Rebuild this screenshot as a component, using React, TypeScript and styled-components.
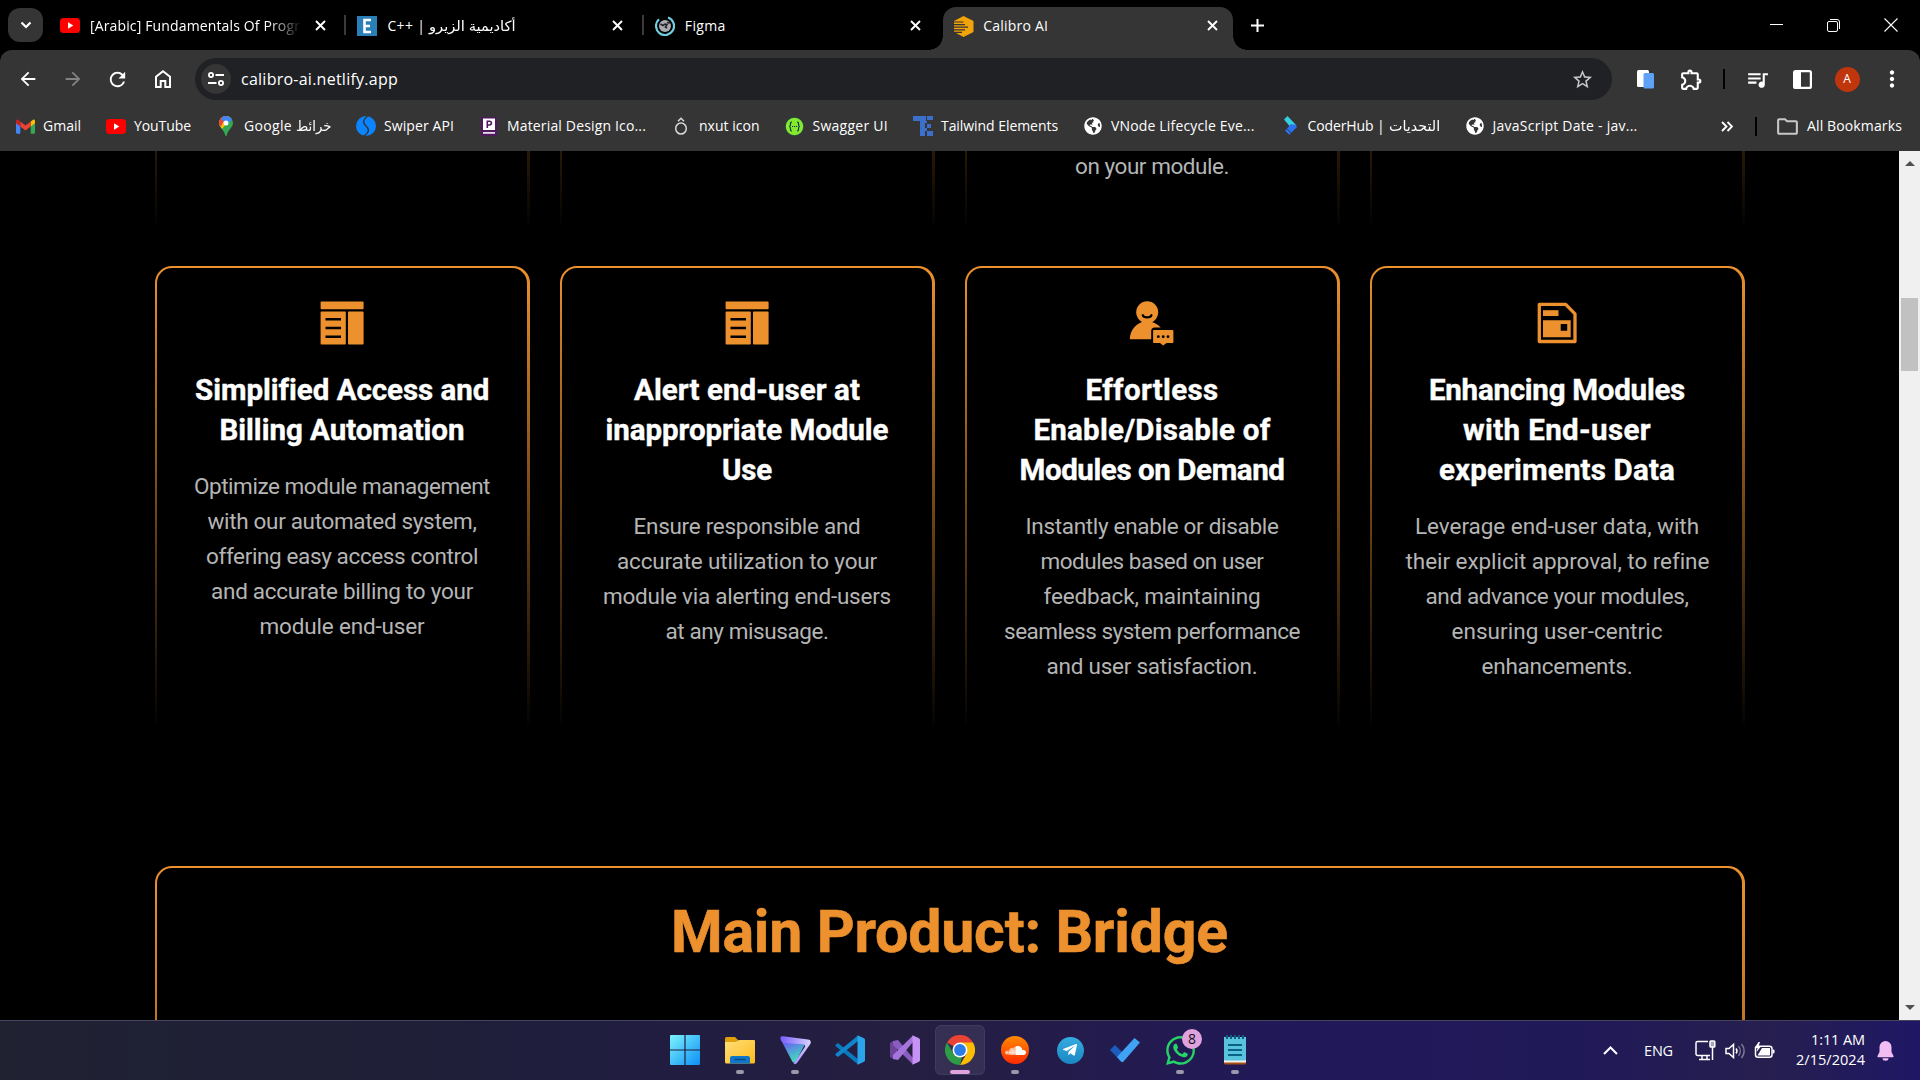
import React, { useLayoutEffect, useRef } from "react";
import styled, { createGlobalStyle, css } from "styled-components";
import {
  MdArrowBack,
  MdArrowForward,
  MdRefresh,
  MdOutlineExtension,
  MdStarBorder,
  MdQueueMusic,
  MdMoreVert,
  MdOutlineFolder,
} from "react-icons/md";
import { FaGlobeAmericas, FaSoundcloud, FaTelegramPlane, FaWhatsapp } from "react-icons/fa";

const ORANGE = "#ec912d";
const CHROME = "#353535";
const UI_FONT = `"Open Sans", "Noto Sans", "DejaVu Sans", sans-serif`;
const SITE_FONT = `Roboto, "Noto Sans", sans-serif`;

const Global = createGlobalStyle`
  * { box-sizing: border-box; }
  html, body { margin: 0; padding: 0; background: #000; overflow: hidden; }
  svg { display: block; flex: none; }
`;

/* ---------- text whose tracking is adjusted to a known width ---------- */

const FitBox = styled.span<{ $w: number }>`
  display: block;
  flex: none;
  width: ${(p) => p.$w}px;
  white-space: pre;
`;
const FitInner = styled.span`
  display: inline-block;
  transform-origin: 0 50%;
`;

function Fit({ w, rtl, children }: { w: number; rtl?: boolean; children: string }) {
  const ref = useRef<HTMLSpanElement>(null);
  useLayoutEffect(() => {
    const el = ref.current;
    if (!el) return;
    el.style.letterSpacing = "0px";
    el.style.transform = "none";
    const natural = el.offsetWidth;
    if (rtl) el.style.transform = `scaleX(${w / natural})`;
    else {
      const exact = el.getBoundingClientRect().width;
      el.style.letterSpacing = `${(w - exact) / children.length}px`;
    }
  }, [w, rtl, children]);
  return (
    <FitBox $w={w}>
      <FitInner ref={ref}>{children}</FitInner>
    </FitBox>
  );
}

/* ---------- frame ---------- */

const Screen = styled.div`
  width: 1920px;
  height: 1080px;
  display: flex;
  flex-direction: column;
  background: #000;
  overflow: hidden;
  font-family: ${UI_FONT};
  color: #fff;
`;

/* ---------- tab strip ---------- */

const TabStrip = styled.div`
  height: 50px;
  flex: none;
  display: flex;
  align-items: center;
  padding: 0 1px 0 8px;
`;
const TabSearch = styled.div`
  width: 35px;
  height: 34px;
  border-radius: 12px;
  background: ${CHROME};
  display: grid;
  place-items: center;
  margin-right: 5px;
`;
const Tab = styled.div<{ $active?: boolean; $divider?: boolean }>`
  width: 297.4px;
  height: 50px;
  display: flex;
  align-items: center;
  padding: 1px 17px 0 12px;
  position: relative;
  font-size: 14px;
  ${(p) =>
    p.$divider &&
    css`
      &::after {
        content: "";
        position: absolute;
        right: -1px;
        top: 15px;
        width: 2px;
        height: 20px;
        background: #3a3a3a;
      }
    `}
  ${(p) =>
    p.$active &&
    css`
      width: 290px;
      height: 43px;
      align-self: flex-end;
      margin-left: 3px;
      padding: 0 13px 6px 10px;
      background: ${CHROME};
      border-radius: 13px 13px 0 0;
      &::before,
      &::after {
        content: "";
        position: absolute;
        bottom: 0;
        width: 14px;
        height: 14px;
      }
      &::before {
        left: -14px;
        background: radial-gradient(circle at 0 0, transparent 13.5px, ${CHROME} 14px);
      }
      &::after {
        right: -14px;
        background: radial-gradient(circle at 100% 0, transparent 13.5px, ${CHROME} 14px);
      }
    `}
`;
const Favicon = styled.div`
  width: 20px;
  height: 20px;
  flex: none;
  display: grid;
  place-items: center;
`;
const TabTitle = styled.div<{ $fade?: boolean }>`
  margin-left: 10px;
  width: 212px;
  flex: none;
  height: 24px;
  line-height: 23px;
  display: flex;
  gap: 4px;
  overflow: hidden;
  ${(p) =>
    p.$fade &&
    css`
      mask-image: linear-gradient(90deg, #000 84%, transparent 100%);
    `}
`;
const TabClose = styled.div`
  margin-left: auto;
  width: 16px;
  height: 16px;
  display: grid;
  place-items: center;
`;
const NewTab = styled.div`
  width: 20px;
  height: 20px;
  margin-left: 14px;
  display: grid;
  place-items: center;
`;
const WindowButtons = styled.div`
  margin-left: auto;
  display: flex;
  height: 48px;
`;
const WindowButton = styled.div`
  width: 57px;
  display: grid;
  place-items: center;
`;

/* ---------- toolbar ---------- */

const Toolbar = styled.div`
  height: 58px;
  flex: none;
  background: ${CHROME};
  border-radius: 12px 12px 0 0;
  display: flex;
  align-items: center;
  padding-left: 5px;
  font-size: 16px;
`;
const ToolButton = styled.div<{ $w?: number; $dim?: boolean }>`
  width: ${(p) => p.$w ?? 45}px;
  height: 45px;
  flex: none;
  display: grid;
  place-items: center;
  color: ${(p) => (p.$dim ? "#828282" : "#fff")};
`;
const Omnibox = styled.div`
  width: 1417px;
  height: 42px;
  margin-left: 10px;
  border-radius: 21px;
  background: #202124;
  display: flex;
  align-items: center;
  padding: 0 18px 0 6px;
`;
const SiteInfo = styled.div`
  width: 30px;
  height: 30px;
  border-radius: 50%;
  background: ${CHROME};
  display: grid;
  place-items: center;
  margin-right: 10px;
`;
const OmniStar = styled.div`
  margin-left: auto;
  color: #c7c7c7;
`;
const Divider = styled.div<{ $h: number }>`
  width: 2px;
  height: ${(p) => p.$h}px;
  background: #000;
  flex: none;
`;
const Avatar = styled.div`
  width: 25px;
  height: 25px;
  border-radius: 50%;
  background: #bf360c;
  display: grid;
  place-items: center;
  font-size: 12px;
  line-height: 1;
`;

/* ---------- bookmarks ---------- */

const Bookmarks = styled.div`
  height: 43px;
  flex: none;
  background: ${CHROME};
  display: flex;
  align-items: center;
  padding: 0 18px 7px 15px;
  font-size: 14px;
  line-height: 20px;
  gap: 25px;
`;
const Bookmark = styled.div`
  display: flex;
  align-items: center;
  gap: 8px;
  flex: none;
`;
const Label = styled.div`
  display: flex;
  gap: 4px;
`;
const BookmarksEnd = styled.div`
  margin-left: auto;
  display: flex;
  align-items: center;
`;

/* ---------- page ---------- */

const Viewport = styled.div`
  height: 869px;
  flex: none;
  display: flex;
  overflow: hidden;
`;
const Page = styled.main`
  width: 1899px;
  height: 869px;
  overflow: hidden;
  padding: 0 154px 0 155px;
  font-family: ${SITE_FONT};
`;
const Features = styled.section`
  margin-top: -385px;
  display: grid;
  grid-template-columns: repeat(4, 375px);
  grid-auto-rows: 460px;
  gap: 40px 30px;
`;
const Frame = styled.div<{ $h: number }>`
  height: ${(p) => p.$h}px;
  padding: 2px 3px 0 2px;
  border-radius: 17px 17px 0 0;
  background: linear-gradient(180deg, ${ORANGE}, #000 101.5%);
`;
const CardBody = styled.div<{ $end?: boolean; $top?: number }>`
  height: 100%;
  background: #000;
  border-radius: 15px 15px 0 0;
  display: flex;
  flex-direction: column;
  align-items: center;
  justify-content: ${(p) => (p.$end ? "flex-end" : "flex-start")};
  padding: ${(p) => p.$top ?? 31}px 0 ${(p) => (p.$end ? 42 : 0)}px;
`;
const CardTitle = styled.h3`
  margin: 23px 0 19px;
  font-size: 29.5px;
  line-height: 40px;
  font-weight: 700;
  -webkit-text-stroke: 0.4px #fff;
  display: flex;
  flex-direction: column;
  align-items: center;
`;
const CardText = styled.p`
  margin: 0;
  font-size: 22.5px;
  line-height: 35px;
  color: #b5b5b5;
  display: flex;
  flex-direction: column;
  align-items: center;
`;
const Product = styled.section`
  margin-top: 140px;
`;
const ProductTitle = styled.h2`
  margin: 0;
  font-size: 59px;
  line-height: 72px;
  font-weight: 700;
  color: ${ORANGE};
  -webkit-text-stroke: 0.6px ${ORANGE};
`;
const Scrollbar = styled.div`
  width: 21px;
  background: #f0f0f0;
  display: flex;
  flex-direction: column;
  align-items: center;
`;
const ScrollArrow = styled.div<{ $down?: boolean }>`
  height: 24px;
  display: grid;
  place-items: center;
  transform: ${(p) => (p.$down ? "rotate(180deg)" : "none")};
`;
const ScrollTrack = styled.div`
  flex: 1;
  padding-top: 123px;
`;
const ScrollThumb = styled.div`
  width: 17px;
  height: 73px;
  background: #c1c1c1;
`;

/* ---------- taskbar ---------- */

const Taskbar = styled.div`
  height: 60px;
  flex: none;
  border-top: 1px solid #46435f;
  background: linear-gradient(90deg, #202232 0%, #1f1f38 22%, #201d40 33%, #251f41 47%, #21185a 68%, #211a57 84%, #261f4e 92%, #1f1765 100%);
  display: flex;
`;
const Apps = styled.div`
  display: flex;
  margin-left: 660px;
`;
const AppSlot = styled.div<{ $active?: boolean }>`
  width: 50px;
  height: 50px;
  margin: 4px 5px 0 0;
  padding-top: 10px;
  display: flex;
  flex-direction: column;
  align-items: center;
  gap: 5px;
  border-radius: 6px;
  position: relative;
  ${(p) =>
    p.$active &&
    css`
      background: rgba(255, 255, 255, 0.08);
      box-shadow: inset 0 0 0 1px rgba(255, 255, 255, 0.06);
    `}
`;
const Running = styled.div<{ $focused?: boolean }>`
  width: ${(p) => (p.$focused ? 20 : 8)}px;
  height: 4px;
  border-radius: 2px;
  background: ${(p) => (p.$focused ? "#dfa2df" : "#9a98ab")};
`;
const Badge = styled.div`
  position: absolute;
  left: 27px;
  top: 4px;
  width: 20px;
  height: 20px;
  border-radius: 50%;
  background: #dfa2df;
  color: #111;
  font-size: 14px;
  line-height: 19px;
  text-align: center;
`;
const Disc = styled.div<{ $bg: string; $s: number }>`
  width: ${(p) => p.$s}px;
  height: ${(p) => p.$s}px;
  margin: ${(p) => (30 - p.$s) / 2}px 0;
  border-radius: 50%;
  background: ${(p) => p.$bg};
  display: grid;
  place-items: center;
  color: #fff;
`;
const WhatsApp = styled(FaWhatsapp)`
  margin: -1.5px 0;
  color: #25d366;
`;
const Tray = styled.div`
  margin-left: auto;
  display: flex;
  align-items: center;
  padding-right: 26px;
  font-size: 14.5px;
  line-height: 20px;
`;
const Gap = styled.div<{ $w: number }>`
  width: ${(p) => p.$w}px;
  flex: none;
`;
const Clock = styled.div`
  display: flex;
  flex-direction: column;
  align-items: flex-end;
  padding-bottom: 1px;
`;

/* ---------- small drawings ---------- */

const Cross = () => (
  <svg width="11" height="11" viewBox="0 0 11 11" stroke="#fff" strokeWidth="1.9">
    <path d="M1 1l9 9M10 1l-9 9" />
  </svg>
);
const YouTube = () => (
  <svg width="20" height="15" viewBox="0 0 20 15">
    <rect width="20" height="15" rx="3.5" fill="#f00" />
    <path d="M8 4.3v6.4l5.3-3.2z" fill="#fff" />
  </svg>
);
const Gmail = () => (
  <svg width="19" height="15" viewBox="0 0 19 15">
    <path d="M0 3v10.5c0 .8.6 1.2 1.3 1.2h3V6.2z" fill="#4285f4" />
    <path d="M19 3v10.5c0 .8-.6 1.2-1.3 1.2h-3V6.2z" fill="#34a853" />
    <path d="M14.7 2.6L17 .8c.9-.6 2 .1 2 1.2v2.3l-4.3 3.3z" fill="#fbbc04" />
    <path d="M4.3 2.6l5.2 3.9 5.2-3.9v5l-5.2 3.9-5.2-3.9z" fill="#ea4335" />
    <path d="M4.3 2.6L2 .8C1.1.2 0 .9 0 2v2.3l4.3 3.3z" fill="#c5221f" />
  </svg>
);
const MapsPin = () => (
  <svg width="14" height="20" viewBox="0 0 14 20">
    <defs>
      <clipPath id="pin">
        <path d="M7 0a7 7 0 0 1 7 7c0 4.500-5 6.500-6.200 12.300-.2 1-1.400 1-1.600 0C5 13.500 0 11.500 0 7a7 7 0 0 1 7-7z" />
      </clipPath>
    </defs>
    <g clipPath="url(#pin)">
      <rect width="14" height="20" fill="#34a853" />
      <path d="M0 0h14L3 13 0 9z" fill="#fbbc04" />
      <path d="M0 0h8L2 10H0z" fill="#ea4335" />
      <path d="M3 0h11v3L8 8 2 3z" fill="#4285f4" />
    </g>
    <circle cx="7" cy="7" r="2.5" fill="#fff" />
  </svg>
);
const Swiper = () => (
  <svg width="20" height="20" viewBox="0 0 20 20">
    <circle cx="10" cy="10" r="10" fill="#0a84ff" />
    <path d="M12.500 -0.500C6.500 3.500 6.500 7 10 10s3.500 6.500-2.500 10.500" fill="none" stroke="#353535" strokeWidth="1.500" />
  </svg>
);
const PDoc = () => (
  <svg width="16" height="19" viewBox="0 0 16 19">
    <rect width="16" height="19" rx="1.5" fill="#50195f" />
    <rect x="2" y="1.5" width="12" height="11.5" fill="#fff" />
    <rect x="2" y="15" width="12" height="1.8" fill="#e6dcea" />
    <path d="M6.300 11V4.200h2.200a1.900 1.900 0 0 1 0 3.800H6.300" fill="none" stroke="#50195f" strokeWidth="1.600" />
  </svg>
);
const NxutIcon = () => (
  <svg width="14" height="18" viewBox="0 0 14 18" fill="none" stroke="#d8d8d8" strokeWidth="1.5">
    <ellipse cx="7" cy="11.5" rx="5.3" ry="5.5" />
    <path d="M4 4.300L7 1.300l3 3" />
  </svg>
);
const Swagger = () => (
  <svg width="19" height="19" viewBox="0 0 19 19">
    <circle cx="9.5" cy="9.5" r="9.2" fill="#85ea2d" stroke="#173647" strokeWidth=".8" />
    <path d="M7 5c-2 0-1.500 1.500-1.500 2.800 0 1-.5 1.700-1.500 1.700 1 0 1.500.7 1.500 1.700C5.500 12.500 5 14 7 14M12 5c2 0 1.500 1.500 1.500 2.800 0 1 .5 1.700 1.500 1.700-1 0-1.500.7-1.500 1.700 0 1.300.5 2.800-1.500 2.800M7 9.500h1.200M9 9.500h1.200M11 9.500h1.200" fill="none" stroke="#173647" strokeWidth="1.200" />
  </svg>
);
const TailwindE = () => (
  <svg width="20" height="20" viewBox="0 0 20 20" fill="#3b6fc9">
    <path d="M0 0h13v5H0zM7 5h5v15H7zM14 0h6v4h-6zM14 8h4v4h-4zM14 15h6v5h-6zM12 5h2v2h-2zM12 12h2v3h-2z" />
  </svg>
);
const CoderHub = () => (
  <svg width="14" height="20" viewBox="0 0 14 20">
    <path d="M1 3.500L4.500 0 13 9l-3.500 4.500z" fill="#35cfe0" />
    <path d="M13 9l1 2-8 8-4-4 6-7z" fill="#2b72f0" />
    <path d="M2 15l4 4M4 13l4 4" stroke="#353535" strokeWidth=".8" />
  </svg>
);
const CalibroLogo = () => (
  <svg width="21" height="21" viewBox="0 0 21 21">
    <path d="M10.500 0L20.500 5v11L10.500 21 1 16V5z" fill="#f0a30a" />
    <path d="M0 6h10.500M0 8.600h12M0 11.200h15M0 13.800h12M0 16.400h9" stroke={CHROME} strokeWidth="1.200" />
  </svg>
);
const FigmaSpinner = () => (
  <svg width="20" height="20" viewBox="0 0 20 20">
    <circle cx="10" cy="10" r="6" fill="#a9abb0" />
    <path d="M5.500 8l2.500 1.500 2-1.500 2 .5-1.500 2.500 1.500 1M12 6.500l3 .5" stroke="#222" strokeWidth="1.600" fill="none" />
    <path d="M13 1.500A9 9 0 1 1 4 3.300" stroke="#6fd0e2" strokeWidth="2.200" fill="none" />
  </svg>
);
const EIcon = () => (
  <svg width="20" height="20" viewBox="0 0 20 20">
    <rect width="20" height="20" fill="#2980b9" />
    <path d="M14 4H7.500v12H14M7.500 10H13" stroke="#fff" strokeWidth="2.600" fill="none" />
  </svg>
);

const LayoutIcon = () => (
  <svg width="48" height="48" viewBox="0 0 48 48" fill={ORANGE}>
    <rect x="2.6" y="2.6" width="43" height="7.7" rx=".8" />
    <rect x="2.6" y="12.6" width="25.2" height="33" rx=".8" />
    <rect x="30" y="12.6" width="15.6" height="33" rx=".8" />
    <path d="M7.500 20.200h15.500M7.500 29h15.500M7.500 37.800h15.500" stroke="#000" strokeWidth="2.600" />
  </svg>
);
const PersonIcon = () => (
  <svg width="48" height="48" viewBox="0 0 48 48" fill={ORANGE}>
    <circle cx="19.2" cy="13.3" r="11" />
    <path d="M14.800 16.300c1 2.700 7.600 2.700 8.600 0" fill="none" stroke="#000" strokeWidth="2.300" strokeLinecap="round" />
    <path d="M1.800 40.300C2 31 8 25 14 23h10c3.500 1 6.500 3 8.700 5.500h-6a3.500 3.500 0 0 0-3.500 3.500v8.300z" />
    <path d="M26 31h18.500c.5 0 .9.400.9.900v11c0 .6-.4 1-.9 1h-6L35.200 46.600 32 43.900h-6c-.5 0-.9-.4-.9-1v-11c0-.5.400-.9.900-.9z" />
    <g fill="#000">
      <circle cx="30.3" cy="37.7" r="1.4" />
      <circle cx="35.2" cy="37.7" r="1.4" />
      <circle cx="40" cy="37.7" r="1.4" />
    </g>
  </svg>
);
const SaveIcon = () => (
  <svg width="48" height="48" viewBox="0 0 48 48" fill={ORANGE}>
    <path d="M6.300 5.300h26.400l9.300 9.500v27.700H6.300z" fill="none" stroke={ORANGE} strokeWidth="3.300" strokeLinejoin="round" />
    <rect x="10" y="11.2" width="15.5" height="5.8" />
    <path fillRule="evenodd" d="M10 21.200h27.700v17H10zM27.700 25v6.700h6.500V25z" />
  </svg>
);

const WindowsLogo = () => (
  <svg width="30" height="30" viewBox="0 0 30 30">
    <defs>
      <linearGradient id="win" x1="0" y1="0" x2="1" y2="1">
        <stop offset="0" stopColor="#7df3fd" />
        <stop offset="1" stopColor="#0c8ff5" />
      </linearGradient>
    </defs>
    <path d="M0 1a1 1 0 0 1 1-1h13.400v14.400H0zM15.600 0H29a1 1 0 0 1 1 1v13.400H15.600zM0 15.600h14.400V30H1a1 1 0 0 1-1-1zM15.600 15.600H30V29a1 1 0 0 1-1 1H15.600z" fill="url(#win)" />
  </svg>
);
const Explorer = () => (
  <svg width="30" height="30" viewBox="0 0 30 30">
    <defs>
      <linearGradient id="folder" x1="0" y1="0" x2="1" y2="1">
        <stop offset="0" stopColor="#ffdf7a" />
        <stop offset="1" stopColor="#fdbb1c" />
      </linearGradient>
    </defs>
    <path d="M0 3.500A1.500 1.500 0 0 1 1.500 2H10l3 3v6H0z" fill="#dfa00c" />
    <path d="M0 7h11l3-2h15a1 1 0 0 1 1 1v21a1.500 1.500 0 0 1-1.500 1.500h-27A1.500 1.500 0 0 1 0 27z" fill="url(#folder)" />
    <path d="M5 28.500V23a2 2 0 0 1 2-2h16a2 2 0 0 1 2 2v5.500z" fill="#0f76c8" />
    <path d="M9.500 24.500h11" stroke="#0a4a86" strokeWidth="1.500" />
  </svg>
);
const Proton = () => (
  <svg width="31" height="30" viewBox="0 0 31 30">
    <defs>
      <linearGradient id="pr" x1="0" y1="0" x2=".5" y2="1">
        <stop offset="0" stopColor="#6d4aff" />
        <stop offset="1" stopColor="#3fe0b8" />
      </linearGradient>
      <linearGradient id="pr2" x1="0" y1="0" x2="1" y2="0">
        <stop offset="0" stopColor="#7a5cff" />
        <stop offset="1" stopColor="#d8d2ff" />
      </linearGradient>
    </defs>
    <path d="M1 5l11 21c1 2 3 2 4 0L25 9z" fill="url(#pr)" />
    <path d="M.5 4C0 2 1 1 3 1.200L28 4.500c2.500.4 3.500 2 2.300 4.500L17 28c-.8 1.300-2.500 1.500-3.500.500l11-16c1-1.800.3-3-1.500-3.200L4 8C2 7.500 1 6 .5 4z" fill="url(#pr2)" />
  </svg>
);
const VSCode = () => (
  <svg width="30" height="30" viewBox="0 0 30 30">
    <path d="M1 9.500L3 8l20 16v5.500L1 11.500c-.8-.8-.8-1.200 0-2z" fill="#0a78bd" />
    <path d="M1 20.500L3 22l20-16V.5L1 18.500c-.8.800-.8 1.200 0 2z" fill="#0f85cc" />
    <path d="M22.500.2L29 3.200a2 2 0 0 1 1 1.700v20.200a2 2 0 0 1-1 1.700l-6.500 3z" fill="#2ba4ec" />
  </svg>
);
const VisualStudio = () => (
  <svg width="30" height="30" viewBox="0 0 30 30">
    <path d="M0 8l3-2v18l-3-2zM3 6l4 3v12l-4 3z" fill="#6b4398" />
    <path d="M3 6l5-1 15 18v6.500L3 10z" fill="#8a5cc0" />
    <path d="M3 24l5 1L23 7V.5L3 20z" fill="#a675dc" />
    <path d="M22.500.2L29 3.200a2 2 0 0 1 1 1.700v20.200a2 2 0 0 1-1 1.700l-6.500 3z" fill="#c792f5" />
  </svg>
);
const ChromeLogo = () => (
  <svg width="30" height="30" viewBox="0 0 30 30">
    <path d="M15 15L2 7.500A15 15 0 0 1 28 7.500z" fill="#ea4335" />
    <path d="M15 7.500h13A15 15 0 0 1 15 30l6.500-11.200z" fill="#fbbc04" />
    <path d="M2 7.500l6.500 11.300L15 22.500l2-.3L15 30A15 15 0 0 1 2 7.500z" fill="#2e9c47" />
    <circle cx="15" cy="15" r="7.5" fill="#fff" />
    <circle cx="15" cy="15" r="5.9" fill="#2a7de8" />
  </svg>
);
const ToDo = () => (
  <svg width="30" height="30" viewBox="0 0 30 30">
    <path d="M0 15l5-5 9 9-2.500 8z" fill="#1c5cbf" />
    <path d="M7 22L24.500 3l5.500 4.500L13.500 26.500c-.8.900-1.700.9-2.500 0z" fill="#3fa2f4" />
  </svg>
);
const Notepad = () => (
  <svg width="24" height="30" viewBox="0 0 24 30">
    <rect x="1" y="2" width="22" height="27.5" rx="1.5" fill="#a8500f" />
    <rect x="1" y="2" width="22" height="25.5" fill="#f1f1f1" />
    <rect x="1" y="2" width="22" height="23.5" rx="1" fill="#58c3dd" />
    <path d="M5 10h14M5 15h14M5 20h14" stroke="#0b6284" strokeWidth="1.800" />
    <path d="M4 0v4M8 0v4M12 0v4M16 0v4M20 0v4" stroke="#0e5c80" strokeWidth="2" />
  </svg>
);

/* ---------- data ---------- */

type Line = [string, number];
const cards: { icon: React.ReactNode; title: Line[]; text: Line[] }[] = [
  {
    icon: <LayoutIcon />,
    title: [["Simplified Access and", 294], ["Billing Automation", 245]],
    text: [
      ["Optimize module management", 296],
      ["with our automated system,", 269],
      ["offering easy access control", 272],
      ["and accurate billing to your", 262],
      ["module end-user", 165],
    ],
  },
  {
    icon: <LayoutIcon />,
    title: [["Alert end-user at", 226], ["inappropriate Module", 283], ["Use", 50]],
    text: [
      ["Ensure responsible and", 227],
      ["accurate utilization to your", 260],
      ["module via alerting end-users", 288],
      ["at any misusage.", 163],
    ],
  },
  {
    icon: <PersonIcon />,
    title: [["Effortless", 133], ["Enable/Disable of", 237], ["Modules on Demand", 265]],
    text: [
      ["Instantly enable or disable", 253],
      ["modules based on user", 223],
      ["feedback, maintaining", 217],
      ["seamless system performance", 296],
      ["and user satisfaction.", 211],
    ],
  },
  {
    icon: <SaveIcon />,
    title: [["Enhancing Modules", 256], ["with End-user", 188], ["experiments Data", 236]],
    text: [
      ["Leverage end-user data, with", 284],
      ["their explicit approval, to refine", 303],
      ["and advance your modules,", 263],
      ["ensuring user-centric", 211],
      ["enhancements.", 151],
    ],
  },
];

type Part = { t: string; w: number; rtl?: boolean };
const bookmarks: { icon: React.ReactNode; parts: Part[] }[] = [
  { icon: <Gmail />, parts: [{ t: "Gmail", w: 38 }] },
  { icon: <YouTube />, parts: [{ t: "YouTube", w: 57 }] },
  { icon: <MapsPin />, parts: [{ t: "Google", w: 48 }, { t: "خرائط", w: 35, rtl: true }] },
  { icon: <Swiper />, parts: [{ t: "Swiper API", w: 70 }] },
  { icon: <PDoc />, parts: [{ t: "Material Design Ico...", w: 139 }] },
  { icon: <NxutIcon />, parts: [{ t: "nxut icon", w: 60.5 }] },
  { icon: <Swagger />, parts: [{ t: "Swagger UI", w: 75.5 }] },
  { icon: <TailwindE />, parts: [{ t: "Tailwind Elements", w: 117 }] },
  { icon: <FaGlobeAmericas size={18} />, parts: [{ t: "VNode Lifecycle Eve...", w: 143.500 }] },
  { icon: <CoderHub />, parts: [{ t: "CoderHub |", w: 77 }, { t: "التحديات", w: 51, rtl: true }] },
  { icon: <FaGlobeAmericas size={18} />, parts: [{ t: "JavaScript Date - jav...", w: 145 }] },
];

const tabs: { icon: React.ReactNode; parts: Part[]; fade?: boolean; divider?: boolean; active?: boolean }[] = [
  { icon: <YouTube />, parts: [{ t: "[Arabic] Fundamentals Of Progr", w: 210 }], fade: true, divider: true },
  { icon: <EIcon />, parts: [{ t: "C++ |", w: 38 }, { t: "أكاديمية الزيرو", w: 87, rtl: true }], divider: true },
  { icon: <FigmaSpinner />, parts: [{ t: "Figma", w: 41 }] },
  { icon: <CalibroLogo />, parts: [{ t: "Calibro AI", w: 65 }], active: true },
];

const apps: { icon: React.ReactNode; running?: boolean; active?: boolean; badge?: string }[] = [
  { icon: <WindowsLogo /> },
  { icon: <Explorer />, running: true },
  { icon: <Proton />, running: true },
  { icon: <VSCode /> },
  { icon: <VisualStudio /> },
  { icon: <ChromeLogo />, running: true, active: true },
  { icon: <Disc $s={28} $bg="linear-gradient(#ff8a00,#ff2a00)"><FaSoundcloud size={21} /></Disc>, running: true },
  { icon: <Disc $s={27} $bg="linear-gradient(#35ace0,#1b87c4)"><FaTelegramPlane size={16} /></Disc> },
  { icon: <ToDo /> },
  { icon: <WhatsApp size={33} />, running: true, badge: "8" },
  { icon: <Notepad />, running: true },
];

/* ---------- screen ---------- */

export default function App() {
  return (
    <Screen>
      <Global />
      <TabStrip>
        <TabSearch>
          <svg width="12" height="8" viewBox="0 0 12 8" fill="none" stroke="#fff" strokeWidth="2.2">
            <path d="M1.500 1.500L6 6l4.500-4.500" />
          </svg>
        </TabSearch>
        {tabs.map((t, i) => (
          <Tab key={i} $active={t.active} $divider={t.divider}>
            <Favicon>{t.icon}</Favicon>
            <TabTitle $fade={t.fade}>
              {t.parts.map((p) => (
                <Fit key={p.t} w={p.w} rtl={p.rtl}>{p.t}</Fit>
              ))}
            </TabTitle>
            <TabClose>
              <Cross />
            </TabClose>
          </Tab>
        ))}
        <NewTab>
          <svg width="13" height="13" viewBox="0 0 13 13" stroke="#fff" strokeWidth="2">
            <path d="M6.500 0v13M0 6.500h13" />
          </svg>
        </NewTab>
        <WindowButtons>
          <WindowButton>
            <svg width="13" height="2" viewBox="0 0 13 2"><rect width="13" height="1" fill="#fff" /></svg>
          </WindowButton>
          <WindowButton>
            <svg width="13" height="13" viewBox="0 0 13 13" fill="none" stroke="#fff">
              <rect x=".5" y="2.5" width="10" height="10" rx="1.5" />
              <path d="M3 .5h7a2.500 2.500 0 0 1 2.500 2.500v7" />
            </svg>
          </WindowButton>
          <WindowButton>
            <svg width="14" height="14" viewBox="0 0 14 14" stroke="#fff" strokeWidth="1.1">
              <path d="M.5.5l13 13M13.500.5l-13 13" />
            </svg>
          </WindowButton>
        </WindowButtons>
      </TabStrip>

      <Toolbar>
        <ToolButton><MdArrowBack size={22} /></ToolButton>
        <ToolButton $dim><MdArrowForward size={22} /></ToolButton>
        <ToolButton><MdRefresh size={23} /></ToolButton>
        <ToolButton>
          <svg width="16" height="18" viewBox="0 0 16 18" fill="none" stroke="#fff" strokeWidth="2">
            <path d="M1 17V6.800L8 1.300l7 5.500V17h-4.700v-6H5.700v6z" />
          </svg>
        </ToolButton>
        <Omnibox>
          <SiteInfo>
            <svg width="16" height="14" viewBox="0 0 16 14" fill="none" stroke="#fff" strokeWidth="1.8">
              <circle cx="3" cy="3" r="2.1" />
              <path d="M7.500 3H16M0 11h8.500" />
              <circle cx="13" cy="11" r="2.1" />
            </svg>
          </SiteInfo>
          <Fit w={157}>calibro-ai.netlify.app</Fit>
          <OmniStar><MdStarBorder size={23} /></OmniStar>
        </Omnibox>
        <Gap $w={10} />
        <ToolButton $w={47}>
          <svg width="17" height="20" viewBox="0 0 17 20">
            <rect x="0" y="1" width="12" height="17" rx="1.5" fill="#fff" />
            <rect x="6.5" y="4" width="10.5" height="15.5" rx="1.5" fill="#5ea1f7" />
          </svg>
        </ToolButton>
        <ToolButton><MdOutlineExtension size={25} /></ToolButton>
        <Gap $w={9} />
        <Divider $h={20} />
        <Gap $w={10} />
        <ToolButton><MdQueueMusic size={25} /></ToolButton>
        <ToolButton $w={44}>
          <svg width="19" height="19" viewBox="0 0 19 19">
            <rect x="1.1" y="1.1" width="16.8" height="16.8" rx="1.5" fill="none" stroke="#fff" strokeWidth="2.2" />
            <rect x="1" y="1" width="7" height="17" fill="#fff" />
          </svg>
        </ToolButton>
        <ToolButton $w={46}><Avatar>A</Avatar></ToolButton>
        <ToolButton $w={44}><MdMoreVert size={26} /></ToolButton>
      </Toolbar>

      <Bookmarks>
        {bookmarks.map((b, i) => (
          <Bookmark key={i}>
            <Favicon>{b.icon}</Favicon>
            <Label>
              {b.parts.map((p) => (
                <Fit key={p.t} w={p.w} rtl={p.rtl}>{p.t}</Fit>
              ))}
            </Label>
          </Bookmark>
        ))}
        <BookmarksEnd>
          <svg width="12" height="11" viewBox="0 0 12 11" fill="none" stroke="#fff" strokeWidth="1.9">
            <path d="M1 1l4.500 4.500L1 10M6.500 1L11 5.500 6.500 10" />
          </svg>
          <Gap $w={22} />
          <Divider $h={19} />
          <Gap $w={18} />
          <MdOutlineFolder size={25} color="#c7c7c7" />
          <Gap $w={7} />
          <Fit w={95}>All Bookmarks</Fit>
        </BookmarksEnd>
      </Bookmarks>

      <Viewport>
        <Page>
          <Features>
            {[0, 1, 2, 3].map((n) => (
              <Frame key={n} $h={460}>
                <CardBody $end>
                  {n === 2 && (
                    <CardText>
                      <Fit w={154}>on your module.</Fit>
                    </CardText>
                  )}
                </CardBody>
              </Frame>
            ))}
            {cards.map((c, i) => (
              <Frame key={i} $h={460}>
                <CardBody>
                  {c.icon}
                  <CardTitle>
                    {c.title.map(([t, w]) => (
                      <Fit key={t} w={w}>{t}</Fit>
                    ))}
                  </CardTitle>
                  <CardText>
                    {c.text.map(([t, w]) => (
                      <Fit key={t} w={w}>{t}</Fit>
                    ))}
                  </CardText>
                </CardBody>
              </Frame>
            ))}
          </Features>
          <Product>
            <Frame $h={800}>
              <CardBody $top={28}>
                <ProductTitle>
                  <Fit w={557}>Main Product: Bridge</Fit>
                </ProductTitle>
              </CardBody>
            </Frame>
          </Product>
        </Page>
        <Scrollbar>
          <ScrollArrow>
            <svg width="10" height="5" viewBox="0 0 10 5"><path d="M0 5l5-5 5 5z" fill="#505050" /></svg>
          </ScrollArrow>
          <ScrollTrack>
            <ScrollThumb />
          </ScrollTrack>
          <ScrollArrow $down>
            <svg width="10" height="5" viewBox="0 0 10 5"><path d="M0 5l5-5 5 5z" fill="#505050" /></svg>
          </ScrollArrow>
        </Scrollbar>
      </Viewport>

      <Taskbar>
        <Apps>
          {apps.map((a, i) => (
            <AppSlot key={i} $active={a.active}>
              {a.icon}
              {a.running && <Running $focused={a.active} />}
              {a.badge && <Badge>{a.badge}</Badge>}
            </AppSlot>
          ))}
        </Apps>
        <Tray>
          <svg width="15" height="9" viewBox="0 0 15 9" fill="none" stroke="#fff" strokeWidth="2">
            <path d="M1 8l6.500-6.500L14 8" />
          </svg>
          <Gap $w={26} />
          <Fit w={29}>ENG</Fit>
          <Gap $w={22} />
          <svg width="21" height="21" viewBox="0 0 21 21" fill="none" stroke="#fff" strokeWidth="1.5">
            <path d="M13 1.500H2.500a1.500 1.500 0 0 0-1.500 1.500v11a1.500 1.500 0 0 0 1.500 1.500H15M7 15.500V19M12 15.500V19M4 19.500h11" />
            <rect x="15" y="1" width="4.8" height="6" rx=".8" fill="#fff" fillOpacity=".6" />
            <path d="M17.500 7v13" />
          </svg>
          <Gap $w={9} />
          <svg width="21" height="18" viewBox="0 0 21 18" fill="none" stroke="#fff" strokeWidth="1.5">
            <path d="M1 6.500v5h3l4.500 4V2.500L4 6.500zM11 6.500c1.200 1.500 1.200 3.500 0 5" />
            <path d="M13.500 4.300c2.300 2.700 2.300 6.700 0 9.400M16.500 2c3.500 4 3.500 10 0 14" opacity=".4" />
          </svg>
          <Gap $w={8} />
          <svg width="21" height="17" viewBox="0 0 21 17">
            <rect x="1.5" y="4.2" width="16.5" height="11" rx="2.5" fill="none" stroke="#fff" strokeWidth="1.5" />
            <path d="M3.500 13.500L8 6h8v7.500z" fill="#fff" />
            <path d="M4.500 0L.5 6h3L2.500 10 7 4.500H4.500L6 0z" fill="#fff" />
            <rect x="18.5" y="7.5" width="2" height="4" rx="1" fill="#fff" />
          </svg>
          <Gap $w={21} />
          <Clock>
            <Fit w={54}>1:11 AM</Fit>
            <Fit w={69}>2/15/2024</Fit>
          </Clock>
          <Gap $w={12} />
          <svg width="17" height="20" viewBox="0 0 17 20" fill="#f1bdf3">
            <path d="M8.500 0a6 6 0 0 1 6 6v5l2 4c.3.600 0 1.200-.7 1.200H1.200C.5 16.200.2 15.600.5 15l2-4V6a6 6 0 0 1 6-6zM5.500 17.200h6a3 2.500 0 0 1-6 0z" />
          </svg>
        </Tray>
      </Taskbar>
    </Screen>
  );
}
